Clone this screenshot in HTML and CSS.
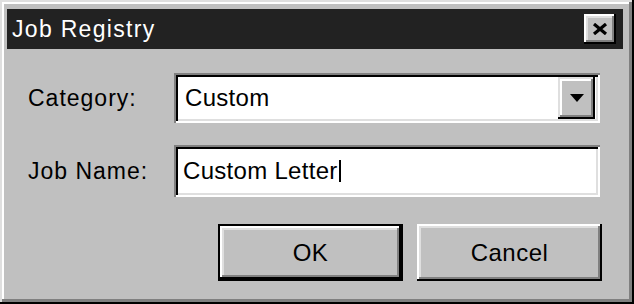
FILE: index.html
```html
<!DOCTYPE html>
<html>
<head>
<meta charset="utf-8">
<link rel="stylesheet" href="styles.css">
</head>
<body>
<div class="window">
  <div class="titlebar">
    <span class="title">Job Registry</span>
    <span class="close">
      <svg width="16" height="12" viewBox="0 0 16 12"><path d="M2 1 L14 11 M14 1 L2 11" stroke="#000" stroke-width="3.2" fill="none"/></svg>
    </span>
  </div>
  <div class="content">
    <div class="row">
      <span class="label">Category:</span>
      <div class="combo">
        <span class="value">Custom</span>
        <span class="drop">
          <svg width="14" height="8" viewBox="0 0 14 8"><polygon points="0,0 14,0 7,8" fill="#000"/></svg>
        </span>
      </div>
    </div>
    <div class="row row2">
      <span class="label">Job Name:</span>
      <div class="field">
        <span class="value">Custom Letter</span><span class="caret"></span>
      </div>
    </div>
    <div class="buttons">
      <button class="btn default">OK</button>
      <button class="btn">Cancel</button>
    </div>
  </div>
</div>
</body>
</html>
```

FILE: styles.css
```css
html, body {
  margin: 0;
  padding: 0;
  width: 634px;
  height: 304px;
  overflow: hidden;
  background: #c0c0c0;
}

.window {
  box-sizing: border-box;
  width: 634px;
  height: 304px;
  background: #c0c0c0;
  padding: 9px 11px 0 7px;
  box-shadow: inset -2px -2px #000, inset 2px 2px #dfdfdf, inset -5px -5px #808080, inset 4px 4px #fff;
  font-family: "Liberation Sans", Arial, sans-serif;
  color: #000;
}

.titlebar {
  height: 40px;
  background: #222;
  display: flex;
  align-items: center;
  justify-content: space-between;
  padding: 0 7px 0 5px;
}

.title {
  color: #fff;
  font-size: 23px;
  letter-spacing: 1.3px;
}

.close {
  width: 32px;
  height: 30px;
  box-sizing: border-box;
  background: #c0c0c0;
  box-shadow: inset -2px -2px #000, inset 2px 2px #fff, inset -4px -4px #808080, inset 4px 4px #dfdfdf;
  display: flex;
  align-items: center;
  justify-content: center;
  padding-bottom: 1px;
}

.content {
  padding-left: 21px;
}

.row {
  display: flex;
  align-items: center;
  margin-top: 24px;
}

.row2 {
  margin-top: 22px;
}

.label {
  width: 146px;
  font-size: 23px;
  letter-spacing: 1px;
}

.combo, .field {
  box-sizing: border-box;
  width: 426px;
  background: #fff;
  padding: 4px;
  display: flex;
  align-items: center;
  box-shadow: inset 2px 2px #808080, inset -2px -2px #fff, inset 4px 4px #000, inset -4px -4px #dfdfdf;
}

.combo {
  height: 50px;
}

.field {
  height: 52px;
}

.value {
  font-size: 24px;
  letter-spacing: 0.3px;
}

.combo .value {
  flex: 1;
  padding-left: 7px;
}

.field .value {
  padding-left: 5px;
}

.caret {
  display: inline-block;
  width: 2px;
  height: 22px;
  background: #000;
  margin-left: 1px;
}

.drop {
  width: 37px;
  height: 42px;
  margin-right: 1px;
  box-sizing: border-box;
  background: #c0c0c0;
  box-shadow: inset -2px -2px #000, inset 2px 2px #dfdfdf, inset -4px -4px #808080, inset 4px 4px #fff;
  display: flex;
  align-items: center;
  justify-content: center;
}

.buttons {
  display: flex;
  gap: 14px;
  margin-top: 27px;
  padding-left: 190px;
}

.btn {
  box-sizing: border-box;
  width: 185px;
  height: 57px;
  border: none;
  margin: 0;
  padding: 0;
  background: #c0c0c0;
  font-family: "Liberation Sans", Arial, sans-serif;
  font-size: 24px;
  letter-spacing: 0.5px;
  color: #000;
  box-shadow: inset -2px -2px #000, inset 2px 2px #fff, inset -4px -4px #808080, inset 4px 4px #dfdfdf;
}

.btn.default {
  box-shadow: inset 0 0 0 2px #000, inset -4px -4px #000, inset 4px 4px #fff, inset -6px -6px #808080, inset 6px 6px #dfdfdf;
}
```
